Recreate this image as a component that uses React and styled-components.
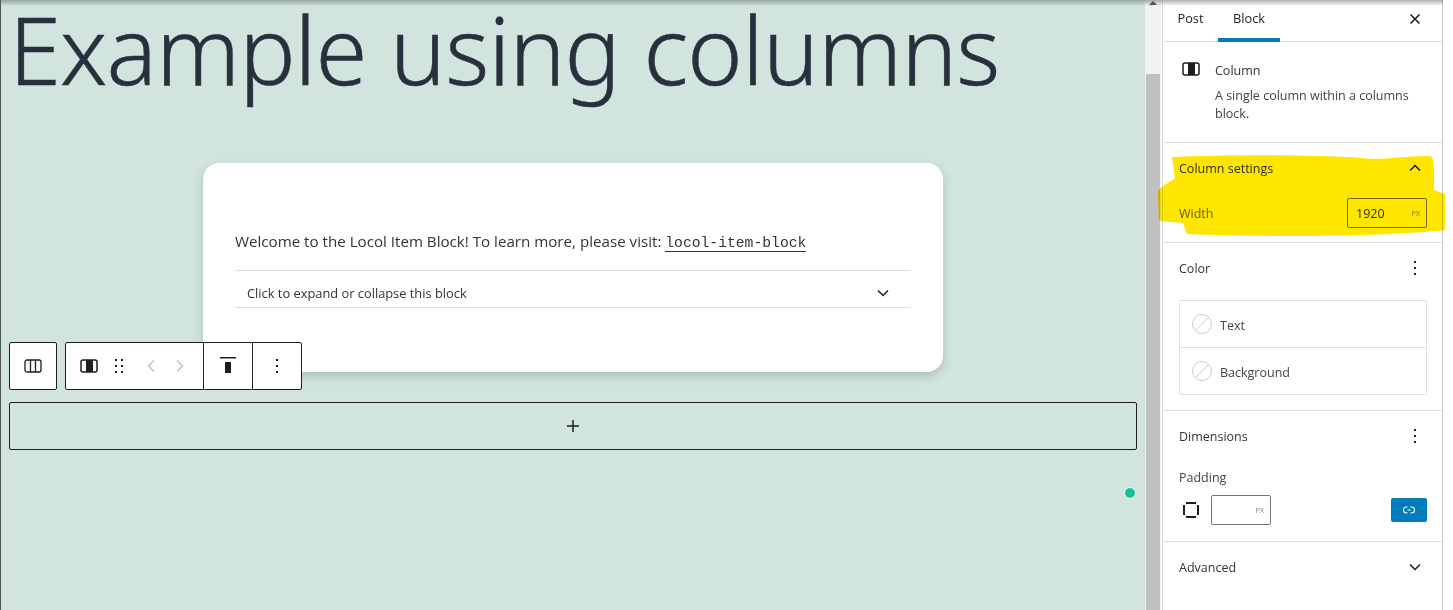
import React from "react";
import styled, { createGlobalStyle } from "styled-components";

const Global = createGlobalStyle`
  html, body { margin: 0; padding: 0; background: #fff; }
  body { width: 1453px; height: 610px; overflow: hidden; font-family: "Open Sans", "Noto Sans", sans-serif; }
`;

const Page = styled.div`
  display: flex;
  width: 1453px;
  height: 610px;
  overflow: hidden;
  background: #fff;
  position: relative;
  &::after {
    content: "";
    position: absolute;
    left: 0;
    top: 0;
    width: 1443px;
    height: 6px;
    background: linear-gradient(rgba(90, 105, 100, 0.5), rgba(90, 105, 100, 0));
    pointer-events: none;
  }
`;

const Canvas = styled.main`
  position: relative;
  width: 1145px;
  height: 610px;
  flex: none;
  background: #d2e4de;
  border-left: 1px solid #50575e;
  box-sizing: border-box;
  padding: 0 8px;
  overflow: hidden;
`;

const Heading = styled.h1`
  margin: 0;
  height: 163px;
  font-family: "Noto Sans", sans-serif;
  font-weight: 300;
  font-size: 94px;
  line-height: 98px;
  letter-spacing: -0.9px;
  -webkit-text-stroke: 0.5px #29303d;
  color: #29303d;
  white-space: nowrap;
`;

const Card = styled.section`
  width: 740px;
  height: 209px;
  margin-left: 194px;
  box-sizing: border-box;
  padding: 64px 32px 0;
  background: #fff;
  border-radius: 16px;
  box-shadow: 0 4px 10px rgba(60, 80, 75, 0.25);
`;

const Intro = styled.p`
  margin: 0;
  height: 43px;
  font-size: 15.15px;
  line-height: 29px;
  color: #333;
  white-space: nowrap;
`;

const Code = styled.code`
  font-family: "Liberation Mono", monospace;
  font-size: 14.7px;
  color: #333;
  border-bottom: 1px solid #333;
`;

const Accordion = styled.div`
  height: 38px;
  box-sizing: border-box;
  border-top: 1px solid #ddd;
  border-bottom: 1px solid #ddd;
  display: flex;
  align-items: center;
  justify-content: space-between;
  padding: 7px 21px 0 12px;
  font-size: 12.85px;
  color: #333;
`;

const Toolbars = styled.div`
  position: absolute;
  left: 8px;
  top: 342px;
  display: flex;
  gap: 8px;
`;

const ToolGroup = styled.div`
  display: flex;
  align-items: center;
  height: 48px;
  box-sizing: border-box;
  background: #fff;
  border: 1px solid #1e1e1e;
  border-radius: 2px;
`;

const ToolCell = styled.div`
  display: flex;
  align-items: center;
  justify-content: center;
  height: 100%;
  width: ${(p) => p.$w}px;
  border-left: ${(p) => (p.$divider ? "1px solid #1e1e1e" : "none")};
  box-sizing: border-box;
`;

const MoverNav = styled.div`
  display: flex;
  align-items: center;
  height: 100%;
  padding: 0 9px 0 10px;
`;

const Appender = styled.div`
  margin-top: 30px;
  height: 48px;
  width: 1128px;
  box-sizing: border-box;
  border: 1px solid #1e1e1e;
  border-radius: 2px;
  display: flex;
  align-items: center;
  justify-content: center;
`;

const Dot = styled.span`
  position: absolute;
  left: 1123px;
  top: 487px;
  width: 10px;
  height: 10px;
  border-radius: 50%;
  background: #14c29a;
  border: 1px solid #fff;
`;

const Scrollbar = styled.div`
  width: 16px;
  height: 610px;
  flex: none;
  background: #f1f1f1;
  box-sizing: border-box;
  padding: 0 1px;
  position: relative;
  &::before {
    content: "";
    display: block;
    height: 74px;
    background: #f1f1f1;
  }
  &::after {
    content: "";
    display: block;
    height: 536px;
    background: #c1c1c1;
  }
`;

const Arrow = styled.span`
  position: absolute;
  left: 4px;
  top: 1px;
  border-left: 4px solid transparent;
  border-right: 4px solid transparent;
  border-bottom: 4px solid #505050;
`;

const Sidebar = styled.aside`
  width: 281px;
  height: 610px;
  flex: none;
  margin-left: 1px;
  box-sizing: border-box;
  border-left: 1px solid #ddd;
  border-right: 1px solid #ccc;
  background: #fff;
  color: #1e1e1e;
  font-size: 13px;
  position: relative;
`;

const TabBar = styled.div`
  height: 42px;
  box-sizing: border-box;
  border-bottom: 1px solid #ddd;
  display: flex;
  align-items: stretch;
  position: relative;
`;

const Tab = styled.div`
  width: ${(p) => p.$w}px;
  display: flex;
  align-items: center;
  justify-content: center;
  padding: 2px 0 4px;
  box-sizing: border-box;
  height: 42px;
  font-size: 12.8px;
  border-bottom: 4px solid ${(p) => (p.$active ? "#007cba" : "transparent")};
`;

const Close = styled.div`
  margin-left: auto;
  margin-right: 20px;
  display: flex;
  align-items: center;
  padding-bottom: 4px;
`;

const Section = styled.section`
  position: relative;
  height: ${(p) => p.$h}px;
  box-sizing: border-box;
  border-bottom: ${(p) => (p.$last ? "none" : "1px solid #ddd")};
  padding: ${(p) => p.$pad || "0 15px 0 16px"};
`;

const BlockCard = styled.div`
  display: flex;
  gap: 15px;
  padding: 20px 0 0 3px;
`;

const BlockName = styled.div`
  font-weight: 500;
  font-size: 12.5px;
  line-height: 18px;
  color: #333;
`;

const BlockDesc = styled.div`
  font-size: 12.5px;
  line-height: 18px;
  margin-top: 7px;
  color: #444;
  width: 205px;
`;

const PanelHead = styled.div`
  display: flex;
  align-items: center;
  justify-content: space-between;
  font-size: 12.5px;
  font-weight: 500;
  color: #333;
  height: 20px;
`;

const ChevSlot = styled.span`
  display: flex;
  margin-right: 5px;
`;

const Highlight = styled.svg`
  position: absolute;
  left: -6px;
  top: 11px;
  width: 288px;
  height: 84px;
  mix-blend-mode: multiply;
  z-index: 2;
`;

const SettingRow = styled.div`
  display: flex;
  align-items: center;
  justify-content: space-between;
  margin-top: 20px;
  height: 30px;
  font-size: 12.5px;
  color: #6a6a6a;
`;

const UnitInput = styled.div`
  width: ${(p) => p.$w}px;
  height: 30px;
  box-sizing: border-box;
  border: 1px solid #757575;
  border-radius: 2px;
  display: flex;
  align-items: center;
  justify-content: space-between;
  padding: 0 6px 0 8px;
  font-size: 12.5px;
  color: #333;
`;

const Unit = styled.span`
  font-size: 7.5px;
  color: #888;
`;

const ColorGroup = styled.div`
  margin-top: 22px;
  border: 1px solid #e0e0e0;
  border-radius: 2px;
`;

const ColorRow = styled.div`
  height: 46px;
  display: flex;
  align-items: center;
  gap: 8px;
  padding-left: 12px;
  box-sizing: border-box;
  font-size: 12.5px;
  color: #444;
  & + & { border-top: 1px solid #e0e0e0; height: 47px; }
`;

const ColorLabel = styled.span`
  position: relative;
  top: 1px;
`;

const PadLabel = styled.div`
  margin-top: 23px;
  font-size: 12.5px;
  line-height: 18px;
  color: #444;
`;

const PadRow = styled.div`
  display: flex;
  align-items: center;
  margin-top: 8px;
`;

const SidesIcon = styled.svg`
  margin-right: 8px;
  flex: none;
`;

const LinkButton = styled.div`
  margin-left: auto;
  width: 36px;
  height: 24px;
  background: #007cba;
  border-radius: 2px;
  display: flex;
  align-items: center;
  justify-content: center;
`;

const Kebab = ({ c = "#1e1e1e" }) => (
  <svg width="24" height="24" viewBox="0 0 24 24" fill={c}>
    <rect x="11" y="5" width="2" height="2" />
    <rect x="11" y="11" width="2" height="2" />
    <rect x="11" y="17" width="2" height="2" />
  </svg>
);

const ColumnIcon = () => (
  <svg width="18" height="14" viewBox="0 0 18 14">
    <rect x="1" y="1" width="16" height="12" rx="2" fill="none" stroke="#1e1e1e" strokeWidth="1.5" />
    <rect x="6" y="1" width="7" height="12" fill="#1e1e1e" />
  </svg>
);

const ColumnsIcon = () => (
  <svg width="18" height="14" viewBox="0 0 18 14" fill="none" stroke="#1e1e1e" strokeWidth="1.3">
    <rect x="1" y="1" width="16" height="12" rx="2" />
    <path d="M6.5 1v12M11.5 1v12" />
  </svg>
);

const Chev = ({ up }) => (
  <svg width="14" height="10" viewBox="0 0 14 10" fill="none" stroke="#1e1e1e" strokeWidth="1.5">
    <path d={up ? "M2 7.5l5-5 5 5" : "M2 2.5l5 5 5-5"} />
  </svg>
);

const NoColor = () => (
  <svg width="20" height="20" viewBox="0 0 20 20" fill="#fff" stroke="#ccc">
    <circle cx="10" cy="10" r="9.5" />
    <path d="M3.5 16.5l13-13" fill="none" />
  </svg>
);

export default function App() {
  return (
    <Page>
      <Global />
      <Canvas>
        <Heading>Example using columns</Heading>
        <Card>
          <Intro>
            Welcome to the Locol Item Block! To learn more, please visit: <Code>locol-item-block</Code>
          </Intro>
          <Accordion>
            <span>Click to expand or collapse this block</span>
            <Chev />
          </Accordion>
        </Card>
        <Toolbars>
          <ToolGroup>
            <ToolCell $w={46}><ColumnsIcon /></ToolCell>
          </ToolGroup>
          <ToolGroup>
            <ToolCell $w={46}><ColumnIcon /></ToolCell>
            <ToolCell $w={14}>
              <svg width="10" height="16" viewBox="0 0 10 16" fill="#1e1e1e">
                <rect x="1" y="1" width="2" height="2" /><rect x="7" y="1" width="2" height="2" />
                <rect x="1" y="7" width="2" height="2" /><rect x="7" y="7" width="2" height="2" />
                <rect x="1" y="13" width="2" height="2" /><rect x="7" y="13" width="2" height="2" />
              </svg>
            </ToolCell>
            <MoverNav>
              <ToolCell $w={29}>
                <svg width="8" height="14" viewBox="0 0 8 14" fill="none" stroke="#c4c4c4" strokeWidth="1.5"><path d="M7 1.5L1.5 7 7 12.5" /></svg>
              </ToolCell>
              <ToolCell $w={29}>
                <svg width="8" height="14" viewBox="0 0 8 14" fill="none" stroke="#c4c4c4" strokeWidth="1.5"><path d="M1 1.5L6.5 7 1 12.5" /></svg>
              </ToolCell>
            </MoverNav>
            <ToolCell $w={49} $divider>
              <svg width="16" height="18" viewBox="0 0 16 18" fill="#1e1e1e">
                <rect x="0" y="0" width="16" height="1.5" />
                <rect x="5" y="5" width="6" height="11" />
              </svg>
            </ToolCell>
            <ToolCell $w={49} $divider><Kebab /></ToolCell>
          </ToolGroup>
        </Toolbars>
        <Appender>
          <svg width="14" height="14" viewBox="0 0 14 14" fill="#1e1e1e">
            <rect x="6.25" y="1" width="1.5" height="12" /><rect x="1" y="6.25" width="12" height="1.5" />
          </svg>
        </Appender>
        <Dot />
      </Canvas>
      <Scrollbar><Arrow /></Scrollbar>
      <Sidebar>
        <TabBar>
          <Tab $w={55}>Post</Tab>
          <Tab $w={62} $active>Block</Tab>
          <Close>
            <svg width="14" height="14" viewBox="0 0 14 14" fill="none" stroke="#1e1e1e" strokeWidth="1.6">
              <path d="M2.5 2.5l9 9M11.5 2.5l-9 9" />
            </svg>
          </Close>
        </TabBar>
        <Section $h={101}>
          <BlockCard>
            <ColumnIcon />
            <div>
              <BlockName>Column</BlockName>
              <BlockDesc>A single column within a columns block.</BlockDesc>
            </div>
          </BlockCard>
        </Section>
        <Section $h={100} $pad="15px 15px 0 16px">
          <PanelHead>Column settings <ChevSlot><Chev up /></ChevSlot></PanelHead>
          <SettingRow>
            Width
            <UnitInput $w={80}>1920<Unit>PX</Unit></UnitInput>
          </SettingRow>
          <Highlight viewBox="0 0 288 84" preserveAspectRatio="none">
            <path
              fill="#ffe600"
              d="M15 3C60 1 150 0 205 4C225 7 250 1 272 2C276 2 277 6 277 20L277 36L288 40L288 76C240 82 120 84 30 80L26 69C18 68 6 68 2 66L1 38C3 32 14 28 18 24Z"
            />
          </Highlight>
        </Section>
        <Section $h={168} $pad="15px 15px 0 16px">
          <PanelHead>Color <Kebab /></PanelHead>
          <ColorGroup>
            <ColorRow><NoColor /><ColorLabel>Text</ColorLabel></ColorRow>
            <ColorRow><NoColor /><ColorLabel>Background</ColorLabel></ColorRow>
          </ColorGroup>
        </Section>
        <Section $h={131} $pad="15px 15px 0 16px">
          <PanelHead>Dimensions <Kebab /></PanelHead>
          <PadLabel>Padding</PadLabel>
          <PadRow>
            <SidesIcon width="24" height="24" viewBox="0 0 24 24" fill="#1e1e1e">
              <rect x="7" y="4" width="10" height="2" /><rect x="7" y="18" width="10" height="2" />
              <rect x="4" y="7" width="2" height="10" /><rect x="18" y="7" width="2" height="10" />
            </SidesIcon>
            <UnitInput $w={60}><span /><Unit>PX</Unit></UnitInput>
            <LinkButton>
              <svg width="14" height="10" viewBox="0 0 14 10" fill="none" stroke="#fff" strokeWidth="1.1">
                <path d="M5.5 2H4.5a3 3 0 000 6h1M8.5 2h1a3 3 0 010 6h-1M5.5 5h3" />
              </svg>
            </LinkButton>
          </PadRow>
        </Section>
        <Section $h={50} $last $pad="15px 15px 0 16px">
          <PanelHead>Advanced <ChevSlot><Chev /></ChevSlot></PanelHead>
        </Section>
      </Sidebar>
    </Page>
  );
}
